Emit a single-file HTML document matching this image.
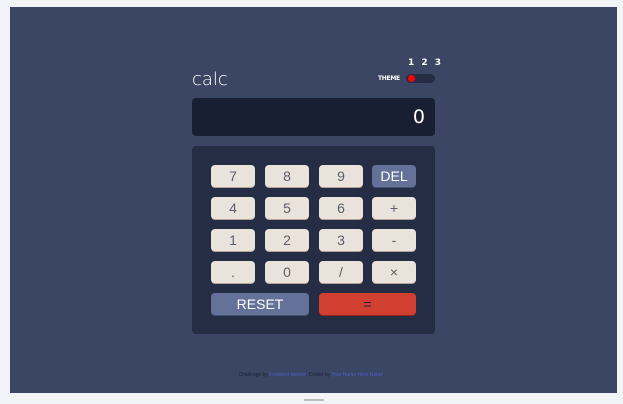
<!DOCTYPE html><html><head><style>
body{margin:0;width:623px;height:404px;background:#f3f4f7;position:relative;overflow:hidden;font-family:"DejaVu Sans","Liberation Sans",sans-serif}
.bg{position:absolute;left:10px;top:7px;width:607px;height:386px;background:#3b4664}
.a{position:absolute}
.k{position:absolute;width:44px;height:22px;background:#eae3dc;border-radius:4px;box-shadow:0 1px 0 #b3a497;color:#5a5f6a;font-size:14px;font-family:"Liberation Sans",sans-serif;text-align:center;line-height:22px}
.d{background:#647198;color:#fff;box-shadow:0 1px 0 #414e73}
.r{background:#d03f2f;box-shadow:0 1px 0 #93261a;color:#222}
</style></head><body>
<div class="bg"></div>
<div class="a" style="left:192px;top:69px;color:#fff;font-size:18px;font-family:'DejaVu Sans',sans-serif;font-weight:200">calc</div>
<div class="a" style="left:408px;top:58px;color:#fff;font-size:9px;letter-spacing:2px;font-weight:bold">1 2 3</div>
<div class="a" style="left:378px;top:75px;color:#fff;font-size:6px;font-weight:bold;letter-spacing:-0.3px">THEME</div>
<div class="a" style="left:406px;top:74px;width:29px;height:9px;border-radius:5px;background:#242d44"></div>
<div class="a" style="left:408px;top:75px;width:7px;height:7px;border-radius:50%;background:#f00"></div>
<div class="a" style="left:192px;top:98px;width:243px;height:38px;border-radius:4px;background:#181f33;color:#fff;font-size:19px;text-align:right;line-height:38px;box-sizing:border-box;padding-right:10px">0</div>
<div class="a" style="left:192px;top:146px;width:243px;height:188px;border-radius:4px;background:#242d44"></div>
<div class="k" style="left:211px;top:165px">7</div><div class="k" style="left:265px;top:165px">8</div><div class="k" style="left:319px;top:165px">9</div><div class="k d" style="left:372px;top:165px">DEL</div>
<div class="k" style="left:211px;top:197px">4</div><div class="k" style="left:265px;top:197px">5</div><div class="k" style="left:319px;top:197px">6</div><div class="k" style="left:372px;top:197px">+</div>
<div class="k" style="left:211px;top:229px">1</div><div class="k" style="left:265px;top:229px">2</div><div class="k" style="left:319px;top:229px">3</div><div class="k" style="left:372px;top:229px">-</div>
<div class="k" style="left:211px;top:261px">.</div><div class="k" style="left:265px;top:261px">0</div><div class="k" style="left:319px;top:261px">/</div><div class="k" style="left:372px;top:261px">×</div>
<div class="k d" style="left:211px;top:293px;width:98px">RESET</div>
<div class="k r" style="left:319px;top:293px;width:97px">=</div>
<div class="a" style="left:0;width:623px;top:372px;text-align:center;font-size:5px;color:#1b2236;font-family:'Liberation Sans',sans-serif">Challenge by <span style="color:#4a5fc0">Frontend Mentor</span>. Coded by <span style="color:#4a5fc0">Your Name Here Name</span>.</div>
<div class="a" style="left:304px;top:399px;width:20px;height:2px;background:#bbb"></div>
</body></html>
